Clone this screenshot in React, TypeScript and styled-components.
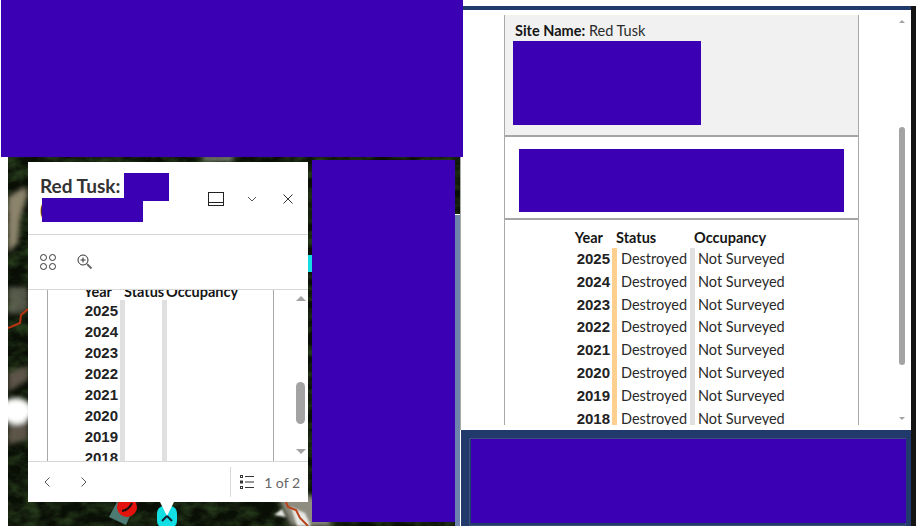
import styled, { createGlobalStyle } from "styled-components";

const YEARS = [2025, 2024, 2023, 2022, 2021, 2020, 2019, 2018];

const GlobalStyle = createGlobalStyle`
  html, body {
    margin: 0;
    padding: 0;
    background: #fff;
    font-family: Lato, "Open Sans", sans-serif;
    color: #151515;
  }
  * { box-sizing: border-box; }
`;

const Page = styled.div`
  position: relative;
  width: 916px;
  height: 526px;
  overflow: hidden;
  display: grid;
  grid-template-columns: 460px 456px;
`;

const Redacted = styled.div<{ $x: number; $y: number; $w: number; $h: number }>`
  position: absolute;
  left: ${(p) => p.$x}px;
  top: ${(p) => p.$y}px;
  width: ${(p) => p.$w}px;
  height: ${(p) => p.$h}px;
  background: #3c00b4;
`;

const LeftColumn = styled.div`
  padding: 157px 0 0 8px;
  height: 526px;
`;

const MapArea = styled.div`
  position: relative;
  width: 452px;
  height: 369px;
  background: #141a0d;
`;

const MapPicture = styled.svg`
  display: block;
  width: 100%;
  height: 100%;
`;

const Popup = styled.div`
  position: absolute;
  left: 20px;
  top: 5px;
  width: 280px;
  height: 340px;
  background: #fff;
  display: flex;
  flex-direction: column;
`;

const PopupPointer = styled.div`
  position: absolute;
  left: 132px;
  top: 100%;
  width: 0;
  height: 0;
  border-left: 7px solid transparent;
  border-right: 7px solid transparent;
  border-top: 14px solid #fff;
`;

const PopupHeader = styled.div`
  height: 73px;
  flex: none;
  display: flex;
  align-items: flex-start;
  justify-content: space-between;
  padding: 12px 12px 0 12px;
  border-bottom: 1px solid #d8d8d8;
`;

const PopupTitle = styled.div`
  font-size: 19px;
  font-weight: 700;
  line-height: 24px;
  color: #333;
`;

const HeaderIcons = styled.div`
  display: flex;
  align-items: center;
  gap: 20px;
  margin-top: 17px;
`;

const ActionBar = styled.div`
  height: 55px;
  flex: none;
  display: flex;
  align-items: center;
  gap: 21px;
  padding: 0 12px;
  border-bottom: 1px solid #d8d8d8;
`;

const PopupBody = styled.div`
  flex: 1;
  min-height: 0;
  display: flex;
  overflow: hidden;
  padding-left: 19px;
`;

const PopupSheet = styled.div`
  width: 227px;
  height: 100%;
  overflow: hidden;
  border-left: 1px solid #a9a9a9;
  border-right: 1px solid #a9a9a9;
`;

const PopupFooter = styled.div`
  height: 41px;
  flex: none;
  display: flex;
  align-items: center;
  border-top: 1px solid #d8d8d8;
  padding: 0 8px 0 11px;
`;

const PagerButtons = styled.div`
  display: flex;
  align-items: center;
  gap: 21px;
  flex: 1;
`;

const FeatureCount = styled.div`
  display: flex;
  align-items: center;
  gap: 10px;
  height: 30px;
  padding-left: 9px;
  border-left: 1px solid #d8d8d8;
  font-size: 14px;
  color: #666;
`;

const Track = styled.div<{ $width: number; $left: number; $top: number }>`
  width: ${(p) => p.$width}px;
  margin-left: ${(p) => p.$left}px;
  padding-top: ${(p) => p.$top}px;
  display: flex;
  flex-direction: column;
  align-items: center;
  flex: none;
`;

const Arrow = styled.div<{ $down?: boolean; $size: number }>`
  flex: none;
  width: 0;
  height: 0;
  border-left: ${(p) => p.$size}px solid transparent;
  border-right: ${(p) => p.$size}px solid transparent;
  ${(p) => (p.$down ? "border-top" : "border-bottom")}: ${(p) => p.$size}px solid #a3a3a3;
`;

const Thumb = styled.div<{ $gap: number; $height: number; $after: number }>`
  flex: none;
  width: 100%;
  height: ${(p) => p.$height}px;
  margin: ${(p) => p.$gap}px 0 ${(p) => p.$after}px;
  border-radius: 5px;
  background: #a3a3a3;
`;

const RightColumn = styled.div`
  display: flex;
  padding-top: 6px;
  height: 526px;
`;

const RightMain = styled.div`
  flex: 1;
  min-width: 0;
  display: flex;
  flex-direction: column;
  border-top: 4px solid #213a6b;
`;

const DarkEdge = styled.div`
  width: 5px;
  flex: none;
  background: #141414;
`;

const Scroller = styled.div`
  height: 420px;
  flex: none;
  display: flex;
  padding: 5px 0 5px 43px;
  border-left: 1px solid #a9a9a9;
`;

const Sheet = styled.div`
  width: 355px;
  height: 100%;
  overflow: hidden;
  flex: none;
  border-left: 1px solid #a9a9a9;
  border-right: 1px solid #a9a9a9;
`;

const NameBlock = styled.div`
  height: 122px;
  padding: 7px 10px 0;
  background: #f1f1f1;
  border-bottom: 2px solid #a5a5a5;
  font-size: 14.5px;
  line-height: 18px;
  color: #2a2a2a;
`;

const Strong = styled.b`
  font-weight: 700;
  color: #151515;
`;

const ChartBlock = styled.div`
  height: 83px;
  border-bottom: 2px solid #a5a5a5;
`;

const Footer = styled.div`
  flex: 1;
  margin-left: 1px;
  background: #213a6b;
  padding: 8px 5px 0 8px;
`;

const FooterPanel = styled.div`
  height: 100%;
  border: 1px solid #3d5079;
`;

const Table = styled.div<{ $top: number }>`
  padding-top: ${(p) => p.$top}px;
`;

const Row = styled.div<{ $h: number; $year: number; $status: number }>`
  display: grid;
  grid-template-columns: ${(p) => p.$year}px ${(p) => p.$status}px 1fr;
  height: ${(p) => p.$h}px;
  line-height: ${(p) => p.$h}px;
  white-space: nowrap;
`;

const PopupHeadRow = styled(Row)`
  margin-top: -11px;
  line-height: 26px;
`;

const Head = styled.div<{ $pad?: number; $end?: number }>`
  font-size: 14.5px;
  font-weight: 700;
  padding-left: ${(p) => p.$pad ?? 0}px;
  padding-right: ${(p) => p.$end ?? 0}px;
  text-align: ${(p) => (p.$end ? "right" : "left")};
`;

const YearCell = styled.div`
  font-family: "Liberation Sans", Arial, sans-serif;
  font-size: 15px;
  font-weight: 700;
  text-align: right;
  padding-right: 2px;
  color: #222;
`;

const ValueCell = styled.div<{ $color: string; $pad: number }>`
  border-left: 5px solid ${(p) => p.$color};
  padding-left: ${(p) => p.$pad}px;
  font-size: 14.5px;
  color: #2a2a2a;
`;

const Line = ({ d }: { d: string }) => (
  <path d={d} fill="none" stroke="currentColor" strokeWidth="1" />
);

const DockIcon = () => (
  <svg width="16" height="14" viewBox="0 0 16 14" color="#222">
    <rect x="0.5" y="0.5" width="15" height="13" fill="none" stroke="currentColor" />
    <Line d="M0 10.5h16" />
  </svg>
);

const ChevronDown = () => (
  <svg width="16" height="16" viewBox="0 0 16 16" color="#555">
    <Line d="M4 6l4 4 4-4" />
  </svg>
);

const CloseIcon = () => (
  <svg width="16" height="16" viewBox="0 0 16 16" color="#333">
    <Line d="M3.5 3.5l9 9M12.5 3.5l-9 9" />
  </svg>
);

const ChevronLeft = () => (
  <svg width="16" height="16" viewBox="0 0 16 16" color="#555">
    <Line d="M10.5 3.5L6 8l4.5 4.5" />
  </svg>
);

const ChevronRight = () => (
  <svg width="16" height="16" viewBox="0 0 16 16" color="#555">
    <Line d="M5.5 3.5L10 8l-4.5 4.5" />
  </svg>
);

const ClusterIcon = () => (
  <svg width="16" height="16" viewBox="0 0 16 16" fill="none" stroke="#333">
    <circle cx="3.5" cy="3.5" r="3" />
    <circle cx="12.5" cy="3.5" r="3" />
    <circle cx="3.5" cy="12.5" r="3" />
    <circle cx="12.5" cy="12.5" r="3" />
  </svg>
);

const ZoomInIcon = () => (
  <svg width="16" height="16" viewBox="0 0 16 16" fill="none" stroke="#333">
    <circle cx="6" cy="6" r="5" />
    <path d="M3.5 6h5M6 3.5v5" />
    <path d="M10 10l4.5 4.5" strokeWidth="2" stroke="#666" />
  </svg>
);

const ListIcon = () => (
  <svg width="14" height="14" viewBox="0 0 14 14" fill="none" stroke="#333">
    <rect x="0.5" y="0.5" width="2" height="2" />
    <rect x="0.5" y="6" width="2" height="2" />
    <rect x="0.5" y="11.5" width="2" height="2" />
    <path d="M5 1.5h9M5 7h9M5 12.5h9" />
  </svg>
);

const MapDrawing = () => (
  <MapPicture viewBox="0 0 452 369">
    <defs>
      <filter id="terrain" x="0" y="0" width="100%" height="100%" colorInterpolationFilters="sRGB">
        <feTurbulence type="fractalNoise" baseFrequency="0.06 0.09" numOctaves="4" seed="11" />
        <feColorMatrix
          type="matrix"
          values="0 0 0 0 0.14  0 0 0 0 0.22  0 0 0 0 0.1  2.4 0 0 0 -0.85"
        />
      </filter>
      <filter id="soft">
        <feGaussianBlur stdDeviation="2.5" />
      </filter>
      <filter id="softer">
        <feGaussianBlur stdDeviation="1" />
      </filter>
    </defs>
    <rect width="452" height="369" fill="#0a0f06" />
    <rect width="452" height="369" filter="url(#terrain)" />
    <g filter="url(#soft)">
      <path d="M0 40l16-10 4 6-8 26-2 24-10 10z" fill="#8c836c" />
      <path d="M0 215l20-6 0 14-20 12zM0 268l20-4v18l-20 6z" fill="#5d5548" />
      <ellipse cx="8" cy="254" rx="16" ry="13" fill="#fff" />
      <path d="M0 130h20v24l-20 4z" fill="#6f7163" opacity="0.7" />
      <path d="M270 340l20-6 25 10 8 25h-40z" fill="#8f8d80" />
      <path d="M195 0h30v3h-30z" fill="#c8c8c0" />
    </g>
    <g filter="url(#softer)">
      <path d="M283 350l14 6 6 13h-14zM266 358l8-6 4 8z" fill="#e8e8e4" />
    </g>
    <path d="M0 171l12-5 1-8 7-6" fill="none" stroke="#b8330f" strokeWidth="2" />
    <path d="M275 338l5 12 8 3 4 8 8 8" fill="none" stroke="#b8421a" strokeWidth="2" />
    <path d="M300 98h4v17h-4z" fill="#16dbe0" />
    <path d="M447 58h5v311h-5z" fill="#6d83ab" />
    <path d="M447 57h5v1h-5z" fill="#fff" />
    <path d="M101 360l8-15 16 7-7 16z" fill="#4d7a72" />
    <circle cx="119" cy="350" r="10" fill="#e3120d" />
    <path d="M114 354q7-1 10-8" fill="none" stroke="#111" strokeWidth="2" />
    <rect x="149" y="349" width="20" height="22" rx="7" fill="#12dfe4" />
    <path d="M154 364l5-5 5 5" fill="none" stroke="#123" strokeWidth="2" />
  </MapPicture>
);

const App = () => {
  return (
    <Page>
      <GlobalStyle />
      <LeftColumn>
        <MapArea>
          <MapDrawing />
          <Popup>
            <PopupHeader>
              <PopupTitle>
                Red Tusk:
                <br />(
              </PopupTitle>
              <HeaderIcons>
                <DockIcon />
                <ChevronDown />
                <CloseIcon />
              </HeaderIcons>
            </PopupHeader>
            <ActionBar>
              <ClusterIcon />
              <ZoomInIcon />
            </ActionBar>
            <PopupBody>
              <PopupSheet>
                <Table $top={0}>
                  <PopupHeadRow $h={21} $year={72} $status={42}>
                    <Head $end={8}>Year</Head>
                    <Head $pad={4}>Status</Head>
                    <Head $pad={4}>Occupancy</Head>
                  </PopupHeadRow>
                  {YEARS.map((year) => (
                    <Row key={year} $h={21} $year={72} $status={42}>
                      <YearCell>{year}</YearCell>
                      <ValueCell $color="#e0e0e0" $pad={0} />
                      <ValueCell $color="#e0e0e0" $pad={0} />
                    </Row>
                  ))}
                </Table>
              </PopupSheet>
              <Track $width={9} $left={22} $top={6}>
                <Arrow $size={5} />
                <Thumb $gap={81} $height={42} $after={25} />
                <Arrow $down $size={5} />
              </Track>
            </PopupBody>
            <PopupFooter>
              <PagerButtons>
                <ChevronLeft />
                <ChevronRight />
              </PagerButtons>
              <FeatureCount>
                <ListIcon />
                1 of 2
              </FeatureCount>
            </PopupFooter>
            <PopupPointer />
          </Popup>
        </MapArea>
      </LeftColumn>
      <RightColumn>
        <RightMain>
          <Scroller>
            <Sheet>
              <NameBlock>
                <Strong>Site Name:</Strong> Red Tusk
              </NameBlock>
              <ChartBlock />
              <Table $top={7}>
                <Row $h={21} $year={106} $status={78}>
                  <Head $end={8}>Year</Head>
                  <Head $pad={5}>Status</Head>
                  <Head $pad={5}>Occupancy</Head>
                </Row>
                {YEARS.map((year) => (
                  <Row key={year} $h={22.8} $year={107} $status={78}>
                    <YearCell>{year}</YearCell>
                    <ValueCell $color="#fdd08f" $pad={4}>
                      Destroyed
                    </ValueCell>
                    <ValueCell $color="#e0e0e0" $pad={3}>
                      Not Surveyed
                    </ValueCell>
                  </Row>
                ))}
              </Table>
            </Sheet>
            <Track $width={6} $left={40} $top={5}>
              <Arrow $size={3} />
              <Thumb $gap={104} $height={238} $after={52} />
              <Arrow $down $size={3} />
            </Track>
          </Scroller>
          <Footer>
            <FooterPanel />
          </Footer>
        </RightMain>
        <DarkEdge />
      </RightColumn>
      <Redacted $x={1} $y={0} $w={462} $h={157} />
      <Redacted $x={124} $y={173} $w={45} $h={28} />
      <Redacted $x={42} $y={198} $w={101} $h={24} />
      <Redacted $x={312} $y={160} $w={143} $h={362} />
      <Redacted $x={513} $y={41} $w={188} $h={84} />
      <Redacted $x={519} $y={149} $w={325} $h={63} />
      <Redacted $x={471} $y={439} $w={435} $h={84} />
    </Page>
  );
};

export default App;
